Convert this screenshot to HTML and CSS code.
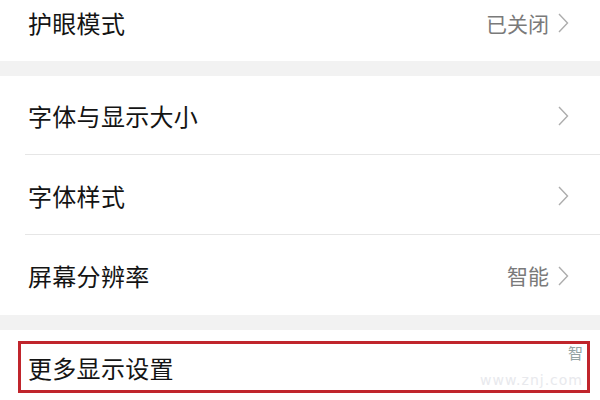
FILE: index.html
```html
<!DOCTYPE html>
<html lang="zh-CN">
<head>
<meta charset="utf-8">
<link rel="stylesheet" href="styles.css">
</head>
<body>
<div class="page">
  <div class="row first">
    <span class="label">护眼模式</span>
    <span class="value">已关闭<svg class="chev" viewBox="0 0 12 20"><polyline points="2,1 10.5,10 2,19"/></svg></span>
  </div>
  <div class="band"></div>
  <div class="row sep">
    <span class="label">字体与显示大小</span>
    <span class="value"><svg class="chev" viewBox="0 0 12 20"><polyline points="2,1 10.5,10 2,19"/></svg></span>
  </div>
  <div class="row sep">
    <span class="label">字体样式</span>
    <span class="value"><svg class="chev" viewBox="0 0 12 20"><polyline points="2,1 10.5,10 2,19"/></svg></span>
  </div>
  <div class="row">
    <span class="label">屏幕分辨率</span>
    <span class="value">智能<svg class="chev" viewBox="0 0 12 20"><polyline points="2,1 10.5,10 2,19"/></svg></span>
  </div>
  <div class="band"></div>
  <div class="last">
    <div class="box">
      <span class="label">更多显示设置</span>
      <span class="wm-glyph">智</span>
      <span class="wm-text">www.znj.com</span>
    </div>
  </div>
</div>
</body>
</html>
```
FILE: styles.css
```css
html, body {
  margin: 0;
  padding: 0;
  background: #ffffff;
}
.page {
  width: 600px;
  height: 400px;
  overflow: hidden;
  font-family: "Noto Sans CJK SC", "Noto Sans", sans-serif;
  background: #ffffff;
}
.row {
  box-sizing: border-box;
  height: 79px;
  display: flex;
  align-items: center;
  justify-content: space-between;
  padding: 0 31px 0 28px;
}
.row.first {
  height: 61px;
  padding-bottom: 15px;
}
.row.sep {
  height: 80px;
  border-bottom: 1px solid transparent;
  background-image: linear-gradient(#e6e6e6, #e6e6e6);
  background-repeat: no-repeat;
  background-size: calc(100% - 25px) 1px;
  background-position: 25px 100%;
}
.label {
  font-size: 24px;
  color: #141414;
  line-height: 1;
  letter-spacing: 0.3px;
}
.value {
  display: flex;
  align-items: center;
  gap: 8px;
  font-size: 21px;
  color: #7a7a7a;
  line-height: 1;
}
.chev {
  width: 12px;
  height: 20px;
  fill: none;
  stroke: #adadad;
  stroke-width: 1.4;
}
.band {
  height: 15px;
  background: #f2f2f2;
}
.last {
  padding: 11px 10px 0 18px;
}
.box {
  position: relative;
  box-sizing: border-box;
  height: 52px;
  border: 3px solid #c0252c;
  display: flex;
  align-items: center;
  padding-left: 7px;
  padding-top: 2px;
  overflow: hidden;
}
.wm-glyph {
  position: absolute;
  right: 4px;
  top: 1px;
  font-size: 15px;
  color: #93a3a3;
  line-height: 1;
}
.wm-text {
  position: absolute;
  right: 4px;
  bottom: 2px;
  font-size: 14px;
  color: #e8e9ed;
  font-family: "DejaVu Sans", sans-serif;
  letter-spacing: 1px;
}
```
